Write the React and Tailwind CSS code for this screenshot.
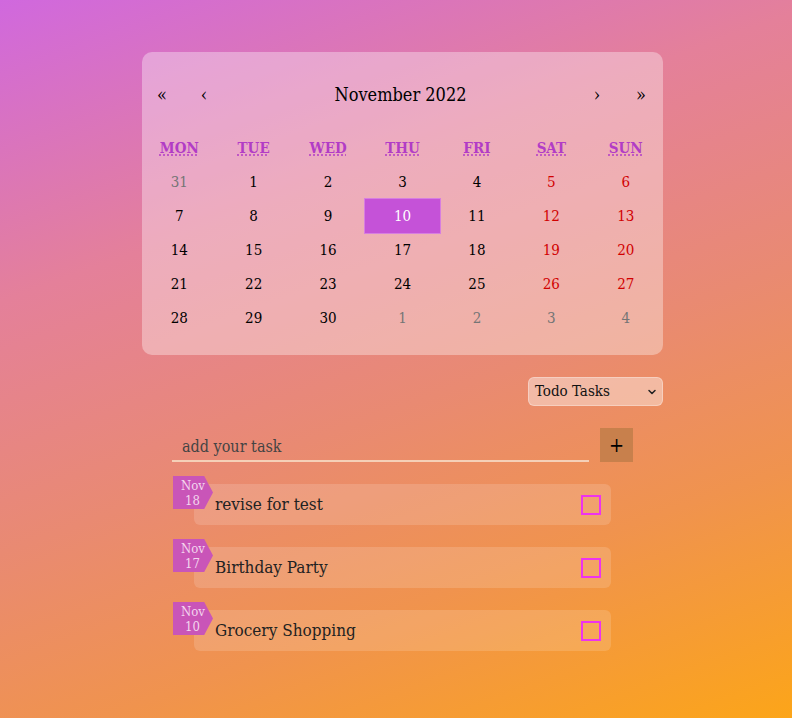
import React from 'react';

const weekdays = ['MON', 'TUE', 'WED', 'THU', 'FRI', 'SAT', 'SUN'];

const days = [
  [31, 'prev'], [1], [2], [3], [4], [5], [6],
  [7], [8], [9], [10, 'today'], [11], [12], [13],
  [14], [15], [16], [17], [18], [19], [20],
  [21], [22], [23], [24], [25], [26], [27],
  [28], [29], [30], [1, 'next'], [2, 'next'], [3, 'next'], [4, 'next'],
];

const tasks = [
  { month: 'Nov', day: 18, title: 'revise for test' },
  { month: 'Nov', day: 17, title: 'Birthday Party' },
  { month: 'Nov', day: 10, title: 'Grocery Shopping' },
];

function dayClass(d, i) {
  const col = i % 7;
  if (d[1] === 'today') return 'bg-[#c552d8] text-white outline outline-1 outline-[#d77ee0]';
  if (d[1]) return 'text-[#757575]';
  if (col >= 5) return 'text-[#d10000]';
  return 'text-black';
}

export default function App() {
  return (
    <div className="min-h-screen bg-[linear-gradient(160deg,#d068de_0%,#e4809a_30%,#e98a72_55%,#f0934e_75%,#fca519_100%)] font-['DejaVu_Serif_Condensed','Liberation_Serif',serif]">
      <div className="ml-[142px] w-[521px] pt-[52px] pb-16">
        {/* calendar */}
        <div className="rounded-[10px] bg-white/35 pt-5 pb-5">
          <div className="flex h-11 items-center text-black">
            <button className="w-10 text-[18px]">«</button>
            <button className="w-11 text-[18px]">‹</button>
            <div className="flex-1 text-center text-[18px]">November 2022</div>
            <button className="w-11 text-[18px]">›</button>
            <button className="w-11 text-[18px]">»</button>
          </div>
          <div className="mt-4 grid h-[33px] grid-cols-7 items-center">
            {weekdays.map(w => (
              <div key={w} className="text-center text-[15px] font-bold text-[#b23cc6]">
                <abbr className="underline decoration-dotted">{w}</abbr>
              </div>
            ))}
          </div>
          <div className="grid grid-cols-7">
            {days.map((d, i) => (
              <div key={i} className={`flex h-[34px] items-center justify-center text-[15px] ${dayClass(d, i)}`}>
                {d[0]}
              </div>
            ))}
          </div>
        </div>

        {/* filter */}
        <div className="mt-[22px] flex justify-end">
          <div className="flex h-[29px] w-[135px] items-center justify-between rounded-md border border-white/30 bg-white/40 pl-[6px] pr-[4px] text-[15px] text-[#111]">
            <span>Todo Tasks</span>
            <svg width="12" height="12" viewBox="0 0 24 24" fill="none" stroke="#222" strokeWidth="3" strokeLinecap="round" strokeLinejoin="round">
              <path d="M6 9l6 6 6-6" />
            </svg>
          </div>
        </div>

        {/* add task */}
        <div className="ml-[30px] mt-[22px] w-[461px]">
          <div className="flex items-end">
            <div className="flex h-[34px] w-[417px] items-end border-b-2 border-[#f5d0b8] pb-[1px] pl-[10px] text-[16px] text-[#444]">
              add your task
            </div>
            <button className="ml-[11px] flex h-[34px] w-[33px] items-center justify-center bg-[#c8804c] text-[20px] text-black">+</button>
          </div>

          {/* tasks */}
          <div className="mt-[14px] flex flex-col gap-[14px]">
            {tasks.map(t => (
              <div key={t.title} className="relative pt-2">
                <div className="absolute left-[1px] top-0 z-10 flex h-[33px] w-[40px] flex-col items-start bg-[#c955b8] pl-[8px] text-[13px] leading-[15px] text-[#f3d6ee] [clip-path:polygon(0_0,78%_0,100%_50%,78%_100%,0_100%)]">
                  <span className="mt-[2px]">{t.month}</span>
                  <span className="pl-[4px]">{t.day}</span>
                </div>
                <div className="ml-[22px] flex h-[41px] w-[417px] items-center justify-between rounded-md bg-white/15 pl-[21px] pr-[10px]">
                  <span className="mt-[1px] text-[17px] text-[#222]">{t.title}</span>
                  <span className="h-[20px] w-[20px] border-2 border-[#ee33ee]" />
                </div>
              </div>
            ))}
          </div>
        </div>
      </div>
    </div>
  );
}
